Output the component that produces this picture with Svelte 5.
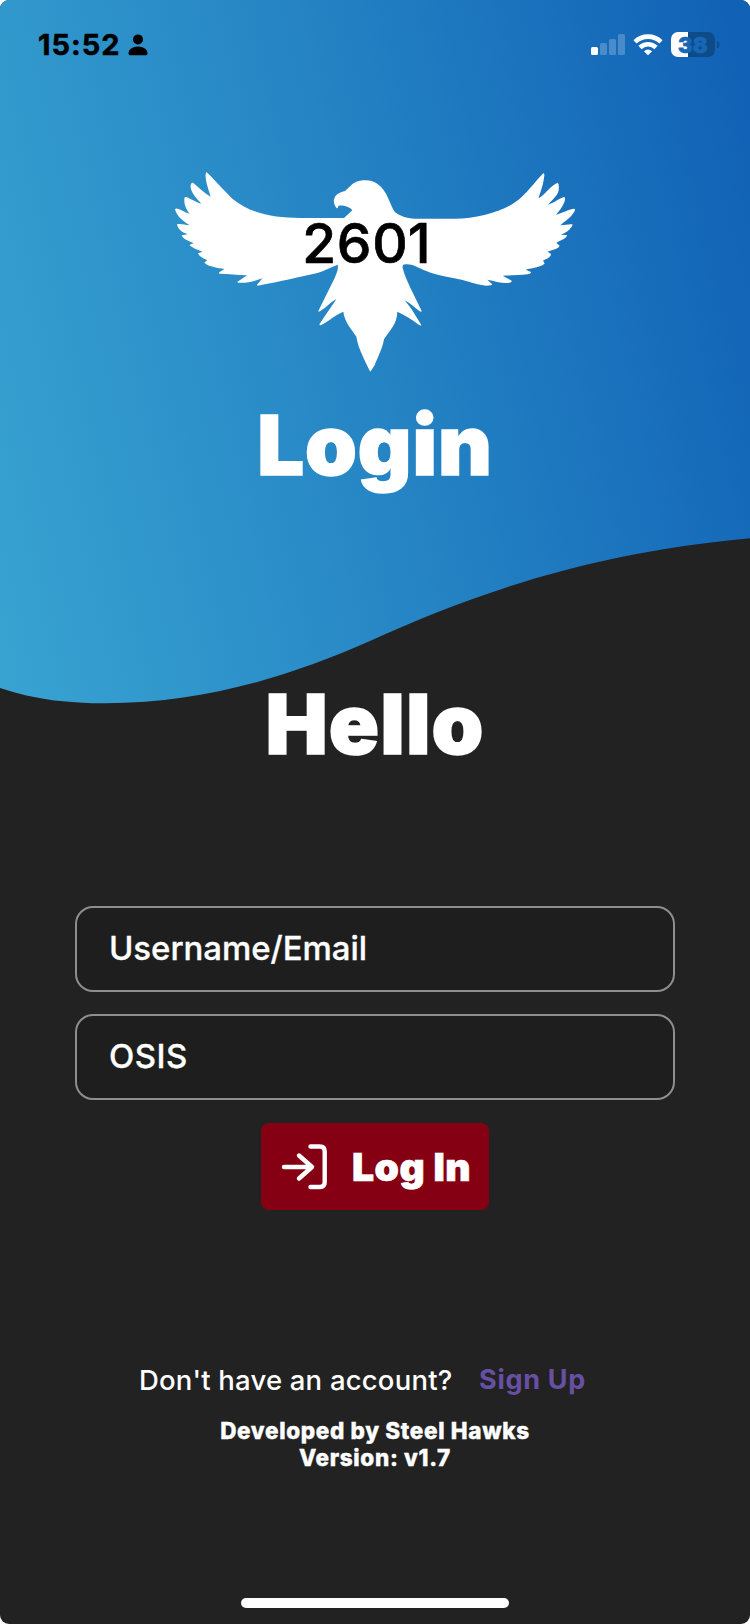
<script>
  const fields = [
    { label: 'Username/Email', name: 'user' },
    { label: 'OSIS', name: 'osis' }
  ];
</script>

<main class="screen">
  <svg class="wave" width="750" height="710" viewBox="0 0 750 710" aria-hidden="true">
    <defs>
      <linearGradient id="sky" gradientUnits="userSpaceOnUse" x1="-33" y1="640" x2="826" y2="441">
        <stop offset="0" stop-color="#39a5d2" />
        <stop offset="0.52" stop-color="#2584c4" />
        <stop offset="1" stop-color="#1162b6" />
      </linearGradient>
    </defs>
    <path fill="url(#sky)" d="M0 0H750V538.3C590 553 476 593 370 641C290 676 205 703.3 105 703.3C70 703.3 35 700 0 688Z" />
  </svg>

  <header class="status">
    <div class="clock">
      <span class="time">15:52</span>
      <svg width="20" height="22" viewBox="0 0 20 22">
        <circle cx="10" cy="5.4" r="5" />
        <path d="M.5 19.2C.5 15.5 4.5 12.4 10 12.4S19.500 15.500 19.500 19.200C19.500 20.600 18.800 21.200 17.500 21.200H2.500C1.200 21.200.5 20.600.5 19.200Z" />
      </svg>
    </div>
    <div class="signals">
      <svg width="34" height="22" viewBox="0 0 34 22" fill="#fff">
        <rect x="0" y="13" width="7" height="8" rx="1.6" />
        <g opacity=".22">
          <rect x="9" y="9" width="7" height="12" rx="1.6" />
          <rect x="18" y="5" width="7" height="16" rx="1.6" />
          <rect x="27" y="0" width="7" height="21" rx="1.6" />
        </g>
      </svg>
      <svg class="wifi" width="30" height="22" viewBox="0 0 30 22">
        <g fill="none" stroke="#fff" stroke-width="4.600">
          <path d="M2 7.900A18.600 18.600 0 0 1 28 7.900" />
          <path d="M7 13.500A11.500 11.500 0 0 1 23 13.500" />
        </g>
        <path fill="#fff" d="M15 21.300L10.900 17.300Q15 13.700 19.100 17.300Z" />
      </svg>
      <svg class="battery" width="48" height="25" viewBox="0 0 48 25">
        <rect width="44" height="25" rx="7" fill="#0d4c88" />
        <path fill="#fff" d="M7 0H17V25H7A7 7 0 0 1 0 18V7A7 7 0 0 1 7 0Z" />
        <path fill="#0d4c88" d="M46 8.500Q48.500 9.500 48.500 12.500T46 16.500Z" />
        <text x="7" y="20.500" textLength="29.500" lengthAdjust="spacingAndGlyphs">38</text>
      </svg>
    </div>
  </header>

  <svg class="hawk" width="420" height="220" viewBox="0 0 1260 660">
    <path fill="#fff" d="M124 36C145 55 175 90 203 117C260 163 330 174 405 174H537L562 151C555 141 535 135 521 137C518 140 520 144 515 145C505 133 504 119 512 107C519 99 529 96 540 93C556 79 566 63 594 61C612 59 627 64 638 72C669 94 673 133 690 157C706 167 723 176 750 176H870C935 176 1010 155 1050 127C1085 104 1110 64 1135 40Q1140 39 1137 53C1134 80 1124 99 1121 115C1140 103 1158 76 1178 68Q1183 70 1181 90C1180 105 1160 121 1149 134C1169 128 1182 115 1197 111Q1202 112 1199 124C1194 139 1183 153 1173 164C1191 160 1210 147 1228 146Q1233 149 1225 159C1215 176 1198 184 1186 196C1200 195 1211 192 1222 193Q1224 195 1219 202C1211 214 1201 219 1188 224L1206 225Q1207 228 1200 235L1174 248L1184 257Q1183 262 1172 267L1147 275C1154 279 1158 280 1158 283C1156 293 1149 295 1134 302L1139 310C1134 319 1112 323 1082 329L1098 336Q1099 340 1087 343C1065 346 1035 346 1013 347L1040 362Q1042 367 1031 369C1009 371 990 363 967 359L982 373Q982 377 963 377C940 375 920 367 893 360C858 352 830 348 797 338C765 328 747 312 724 313Q711 312 713 323C718 346 728 363 736 383L770 453Q770 457 764 454C749 444 737 429 719 421C730 435 739 445 745 456L769 495Q768 499 759 493C741 478 719 466 697 455C696 494 675 508 657 538C653 565 636 596 629 616L616 635C608 621 600 604 593 588C584 568 578 553 574 530C562 510 538 486 535 455C509 465 492 484 467 496Q460 496 466 488L514 418C494 427 482 446 462 455Q458 454 463 447L509 354C515 338 521 329 518 314C497 322 484 330 457 339C405 350 348 365 278 377Q274 374 280 370L292 355C266 364 249 369 220 368Q214 366 221 363L246 346C217 345 190 341 164 341Q159 339 164 336L178 327C160 323 132 321 118 308L127 300C114 296 101 287 99 280L113 275L90 266L75 257Q72 254 86 250C70 242 53 237 50 226L68 223C49 216 39 208 36 193C46 190 58 194 74 196C54 184 36 170 30 148C35 140 53 155 73 161C62 145 55 130 59 112C65 107 87 126 109 131C96 117 79 100 77 82Q76 67 84 68C102 82 118 99 137 110C130 86 120 61 122 41Z" />
    <text class="team" x="412 515 622 728" y="307.500">2601</text>
  </svg>

  <h1 class="login">Login</h1>
  <h1 class="hello">Hello</h1>

  <form class="form">
    {#each fields as field (field.name)}
      <div class="field"><span class={field.name}>{field.label}</span></div>
    {/each}
    <button type="button">
      <svg width="46" height="46" viewBox="0 0 46 46" fill="none" stroke="#fff" stroke-width="4.400" stroke-linecap="round" stroke-linejoin="round">
        <path d="M3 23H31M18 11.500L31 23L18 34.500" />
        <path d="M29.500 2.500H39Q43.700 2.500 43.700 7.500V38Q43.700 43 39 43H29.500" />
      </svg>
      <span>Log In</span>
    </button>
  </form>

  <p class="signup"><span class="ask">Don't have an account?</span><a href="#signup">Sign Up</a></p>

  <footer>
    <div class="dev">Developed by Steel Hawks</div>
    <div class="ver">Version: v1.7</div>
  </footer>
  <div class="home"></div>
</main>

<style>
  :global(body) { margin: 0; background: #fff; }
  .screen {
    position: relative;
    box-sizing: border-box;
    width: 750px;
    height: 1624px;
    overflow: hidden;
    border-radius: 9px;
    background: #222;
    color: #fff;
    font-family: Inter, "Liberation Sans", sans-serif;
    display: flex;
    flex-direction: column;
    align-items: center;
    white-space: nowrap;
    isolation: isolate;
  }
  svg { display: block; flex: none; }
  .wave { position: absolute; left: 0; top: 0; z-index: -1; }
  .status {
    width: 100%;
    box-sizing: border-box;
    height: 89px;
    padding: 0 31px 0 38px;
    display: flex;
    align-items: center;
    justify-content: space-between;
  }
  .clock { display: flex; align-items: center; gap: 7.500px; color: #000; }
  .time { font-size: 29px; font-weight: 700; letter-spacing: 1px; -webkit-text-stroke: 0.500px #000; }
  .signals { display: flex; align-items: center; }
  .wifi { margin-left: 8px; }
  .battery { margin-left: 8px; overflow: visible; }
  .battery text { font-size: 22px; font-weight: 900; fill: #1767b7; stroke: #1767b7; stroke-width: 0.600; }
  .hawk { margin-top: 71px; }
  .team { font-size: 165px; font-weight: 500; fill: #000; stroke: #000; stroke-width: 2; }
  h1 { margin: 0; height: 100px; line-height: 100px; font-size: 83px; font-weight: 900; -webkit-text-stroke: 1.500px #fff; }
  .login { margin-top: 15px; letter-spacing: 0.900px; }
  .hello { margin-top: 179px; letter-spacing: 1.100px; }
  .form { margin-top: 132px; width: 600px; display: flex; flex-direction: column; align-items: center; }
  .field {
    box-sizing: border-box;
    width: 600px;
    height: 86px;
    margin-bottom: 22px;
    padding: 0 0 2px 32px;
    border: 2px solid #8e8e8e;
    border-radius: 18px;
    background: #1e1e1e;
    display: flex;
    align-items: center;
    font-size: 33px;
    font-weight: 500;
    -webkit-text-stroke: 0.300px #fff;
  }
  .user { letter-spacing: -0.060px; }
  .osis { letter-spacing: 0.500px; }
  button {
    box-sizing: border-box;
    width: 228px;
    height: 87px;
    margin-top: 1px;
    padding: 0 0 0 20px;
    border: 0;
    border-radius: 8px;
    background: #860013;
    color: #fff;
    display: flex;
    align-items: center;
    gap: 25px;
    font: 900 39px Inter, "Liberation Sans", sans-serif;
    letter-spacing: 0.500px;
    -webkit-text-stroke: 0.700px #fff;
  }
  button span { padding-bottom: 1px; }
  .signup {
    margin: 150px 0 0;
    width: 472px;
    height: 40px;
    display: flex;
    align-items: center;
    font-size: 27.500px;
  }
  .ask { width: 340px; font-weight: 500; letter-spacing: 0.200px; }
  a { color: #6750a4; font-size: 27px; font-weight: 700; letter-spacing: 0.700px; padding-bottom: 2px; text-decoration: none; }
  footer { margin-top: 17px; text-align: center; font-size: 22.500px; line-height: 27px; font-weight: 800; letter-spacing: 0.660px; -webkit-text-stroke: 0.400px #fff; }
  .home { width: 268px; height: 10px; border-radius: 5px; background: #fff; margin-top: 127px; }
</style>
